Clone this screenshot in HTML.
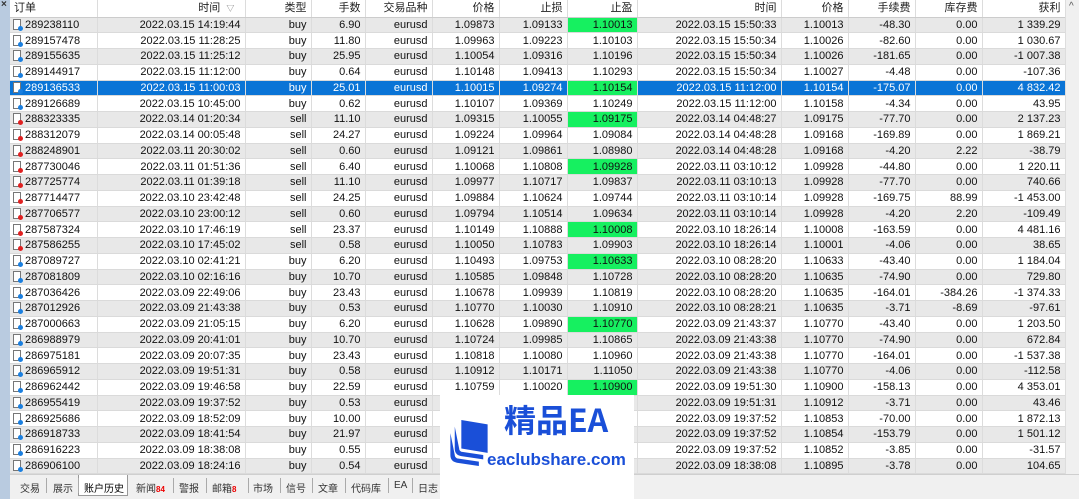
<!DOCTYPE html>
<html><head><meta charset="utf-8"><style>
*{margin:0;padding:0;box-sizing:border-box}
body{width:1079px;height:499px;overflow:hidden;background:#fff;font-family:"Liberation Sans","Noto Sans CJK SC",sans-serif;font-size:11px;color:#111;position:relative}
#strip{position:absolute;left:0;top:0;width:10px;height:499px;background:#b9cbe0}
#x{position:absolute;left:1px;top:-1px;font-size:10px;font-weight:bold;color:#333}
table{position:absolute;left:10px;top:0;border-collapse:collapse;table-layout:fixed;width:1055px}
td,th{height:15.75px;padding:0 4px 0 2px;text-align:right;white-space:nowrap;overflow:hidden;border-right:1px solid #dcdcdc;border-bottom:1px solid #dadada;line-height:14px;font-weight:normal}
th{height:17px;background:#fff;color:#222;border-bottom:1px solid #ccc}
th:first-child{text-align:left;padding-left:4px}
tr:nth-child(even) td{background:#e8e8e8}
tr.sel td{background:#0a74d6!important;color:#fff}
td.o{text-align:left;padding-left:3px}
td.g{background:#16f060!important;color:#111}
tr.sel td.g{background:#16f060!important;color:#111}
.ic{display:inline-block;width:8px;height:11px;border:1px solid #777;background:#fff;vertical-align:-2px;margin-right:4px;position:relative}
.ic:after{content:"";position:absolute;right:-3px;bottom:-2px;width:5px;height:5px;border-radius:50%;background:#1a7fe0}
.s .ic:after{background:#e02020}
#sb{position:absolute;left:1065px;top:0;width:14px;height:474px;background:#f0f0f0;border-left:1px solid #ddd}
#sb:before{content:"^";position:absolute;left:3px;top:1px;font-size:10px;color:#555}
#tabs{position:absolute;left:10px;top:474px;width:1069px;height:25px;background:#f0f0f0;border-top:1px solid #cfcfcf}
#tabs span{position:absolute;top:5px;font-size:10px;color:#333}
#tabs i{position:absolute;top:3px;width:1px;height:15px;background:#aaa}
#act{position:absolute;left:68px;top:0;width:50px;height:21px;background:#fff;border:1px solid #999;border-top:none}
#tabs b{color:#e00;font-size:8px;font-weight:bold}
#wm{position:absolute;left:440px;top:395px;width:194px;height:104px;background:#fff}
#wm .t1{position:absolute;left:64px;top:4px;font-size:32px;font-weight:bold;color:#1a4fd8;font-family:"Noto Sans CJK SC","Liberation Sans",sans-serif;line-height:40px}
#wm .t2{position:absolute;left:47px;top:55px;font-size:17px;font-weight:bold;color:#1a4fd8}
</style></head><body>
<div id="strip"><div id="x">×</div></div>
<table>
<colgroup><col style="width:87px"><col style="width:148px"><col style="width:66px"><col style="width:54px"><col style="width:67px"><col style="width:67px"><col style="width:68px"><col style="width:70px"><col style="width:144px"><col style="width:67px"><col style="width:67px"><col style="width:67px"><col style="width:83px"></colgroup>
<tr><th>订单</th><th>时间 &nbsp;<span style="font-size:8px;color:#777">▽</span>&nbsp;&nbsp;</th><th>类型</th><th>手数</th><th>交易品种</th><th>价格</th><th>止损</th><th>止盈</th><th>时间</th><th>价格</th><th>手续费</th><th>库存费</th><th>获利</th></tr>
<tr><td class="o"><span class="ic"></span>289238110</td><td>2022.03.15 14:19:44</td><td>buy</td><td>6.90</td><td>eurusd</td><td>1.09873</td><td>1.09133</td><td class="g">1.10013</td><td>2022.03.15 15:50:33</td><td>1.10013</td><td>-48.30</td><td>0.00</td><td>1 339.29</td></tr>
<tr><td class="o"><span class="ic"></span>289157478</td><td>2022.03.15 11:28:25</td><td>buy</td><td>11.80</td><td>eurusd</td><td>1.09963</td><td>1.09223</td><td>1.10103</td><td>2022.03.15 15:50:34</td><td>1.10026</td><td>-82.60</td><td>0.00</td><td>1 030.67</td></tr>
<tr><td class="o"><span class="ic"></span>289155635</td><td>2022.03.15 11:25:12</td><td>buy</td><td>25.95</td><td>eurusd</td><td>1.10054</td><td>1.09316</td><td>1.10196</td><td>2022.03.15 15:50:34</td><td>1.10026</td><td>-181.65</td><td>0.00</td><td>-1 007.38</td></tr>
<tr><td class="o"><span class="ic"></span>289144917</td><td>2022.03.15 11:12:00</td><td>buy</td><td>0.64</td><td>eurusd</td><td>1.10148</td><td>1.09413</td><td>1.10293</td><td>2022.03.15 15:50:34</td><td>1.10027</td><td>-4.48</td><td>0.00</td><td>-107.36</td></tr>
<tr class="sel"><td class="o"><span class="ic"></span>289136533</td><td>2022.03.15 11:00:03</td><td>buy</td><td>25.01</td><td>eurusd</td><td>1.10015</td><td>1.09274</td><td class="g">1.10154</td><td>2022.03.15 11:12:00</td><td>1.10154</td><td>-175.07</td><td>0.00</td><td>4 832.42</td></tr>
<tr><td class="o"><span class="ic"></span>289126689</td><td>2022.03.15 10:45:00</td><td>buy</td><td>0.62</td><td>eurusd</td><td>1.10107</td><td>1.09369</td><td>1.10249</td><td>2022.03.15 11:12:00</td><td>1.10158</td><td>-4.34</td><td>0.00</td><td>43.95</td></tr>
<tr class="s"><td class="o"><span class="ic"></span>288323335</td><td>2022.03.14 01:20:34</td><td>sell</td><td>11.10</td><td>eurusd</td><td>1.09315</td><td>1.10055</td><td class="g">1.09175</td><td>2022.03.14 04:48:27</td><td>1.09175</td><td>-77.70</td><td>0.00</td><td>2 137.23</td></tr>
<tr class="s"><td class="o"><span class="ic"></span>288312079</td><td>2022.03.14 00:05:48</td><td>sell</td><td>24.27</td><td>eurusd</td><td>1.09224</td><td>1.09964</td><td>1.09084</td><td>2022.03.14 04:48:28</td><td>1.09168</td><td>-169.89</td><td>0.00</td><td>1 869.21</td></tr>
<tr class="s"><td class="o"><span class="ic"></span>288248901</td><td>2022.03.11 20:30:02</td><td>sell</td><td>0.60</td><td>eurusd</td><td>1.09121</td><td>1.09861</td><td>1.08980</td><td>2022.03.14 04:48:28</td><td>1.09168</td><td>-4.20</td><td>2.22</td><td>-38.79</td></tr>
<tr class="s"><td class="o"><span class="ic"></span>287730046</td><td>2022.03.11 01:51:36</td><td>sell</td><td>6.40</td><td>eurusd</td><td>1.10068</td><td>1.10808</td><td class="g">1.09928</td><td>2022.03.11 03:10:12</td><td>1.09928</td><td>-44.80</td><td>0.00</td><td>1 220.11</td></tr>
<tr class="s"><td class="o"><span class="ic"></span>287725774</td><td>2022.03.11 01:39:18</td><td>sell</td><td>11.10</td><td>eurusd</td><td>1.09977</td><td>1.10717</td><td>1.09837</td><td>2022.03.11 03:10:13</td><td>1.09928</td><td>-77.70</td><td>0.00</td><td>740.66</td></tr>
<tr class="s"><td class="o"><span class="ic"></span>287714477</td><td>2022.03.10 23:42:48</td><td>sell</td><td>24.25</td><td>eurusd</td><td>1.09884</td><td>1.10624</td><td>1.09744</td><td>2022.03.11 03:10:14</td><td>1.09928</td><td>-169.75</td><td>88.99</td><td>-1 453.00</td></tr>
<tr class="s"><td class="o"><span class="ic"></span>287706577</td><td>2022.03.10 23:00:12</td><td>sell</td><td>0.60</td><td>eurusd</td><td>1.09794</td><td>1.10514</td><td>1.09634</td><td>2022.03.11 03:10:14</td><td>1.09928</td><td>-4.20</td><td>2.20</td><td>-109.49</td></tr>
<tr class="s"><td class="o"><span class="ic"></span>287587324</td><td>2022.03.10 17:46:19</td><td>sell</td><td>23.37</td><td>eurusd</td><td>1.10149</td><td>1.10888</td><td class="g">1.10008</td><td>2022.03.10 18:26:14</td><td>1.10008</td><td>-163.59</td><td>0.00</td><td>4 481.16</td></tr>
<tr class="s"><td class="o"><span class="ic"></span>287586255</td><td>2022.03.10 17:45:02</td><td>sell</td><td>0.58</td><td>eurusd</td><td>1.10050</td><td>1.10783</td><td>1.09903</td><td>2022.03.10 18:26:14</td><td>1.10001</td><td>-4.06</td><td>0.00</td><td>38.65</td></tr>
<tr><td class="o"><span class="ic"></span>287089727</td><td>2022.03.10 02:41:21</td><td>buy</td><td>6.20</td><td>eurusd</td><td>1.10493</td><td>1.09753</td><td class="g">1.10633</td><td>2022.03.10 08:28:20</td><td>1.10633</td><td>-43.40</td><td>0.00</td><td>1 184.04</td></tr>
<tr><td class="o"><span class="ic"></span>287081809</td><td>2022.03.10 02:16:16</td><td>buy</td><td>10.70</td><td>eurusd</td><td>1.10585</td><td>1.09848</td><td>1.10728</td><td>2022.03.10 08:28:20</td><td>1.10635</td><td>-74.90</td><td>0.00</td><td>729.80</td></tr>
<tr><td class="o"><span class="ic"></span>287036426</td><td>2022.03.09 22:49:06</td><td>buy</td><td>23.43</td><td>eurusd</td><td>1.10678</td><td>1.09939</td><td>1.10819</td><td>2022.03.10 08:28:20</td><td>1.10635</td><td>-164.01</td><td>-384.26</td><td>-1 374.33</td></tr>
<tr><td class="o"><span class="ic"></span>287012926</td><td>2022.03.09 21:43:38</td><td>buy</td><td>0.53</td><td>eurusd</td><td>1.10770</td><td>1.10030</td><td>1.10910</td><td>2022.03.10 08:28:21</td><td>1.10635</td><td>-3.71</td><td>-8.69</td><td>-97.61</td></tr>
<tr><td class="o"><span class="ic"></span>287000663</td><td>2022.03.09 21:05:15</td><td>buy</td><td>6.20</td><td>eurusd</td><td>1.10628</td><td>1.09890</td><td class="g">1.10770</td><td>2022.03.09 21:43:37</td><td>1.10770</td><td>-43.40</td><td>0.00</td><td>1 203.50</td></tr>
<tr><td class="o"><span class="ic"></span>286988979</td><td>2022.03.09 20:41:01</td><td>buy</td><td>10.70</td><td>eurusd</td><td>1.10724</td><td>1.09985</td><td>1.10865</td><td>2022.03.09 21:43:38</td><td>1.10770</td><td>-74.90</td><td>0.00</td><td>672.84</td></tr>
<tr><td class="o"><span class="ic"></span>286975181</td><td>2022.03.09 20:07:35</td><td>buy</td><td>23.43</td><td>eurusd</td><td>1.10818</td><td>1.10080</td><td>1.10960</td><td>2022.03.09 21:43:38</td><td>1.10770</td><td>-164.01</td><td>0.00</td><td>-1 537.38</td></tr>
<tr><td class="o"><span class="ic"></span>286965912</td><td>2022.03.09 19:51:31</td><td>buy</td><td>0.58</td><td>eurusd</td><td>1.10912</td><td>1.10171</td><td>1.11050</td><td>2022.03.09 21:43:38</td><td>1.10770</td><td>-4.06</td><td>0.00</td><td>-112.58</td></tr>
<tr><td class="o"><span class="ic"></span>286962442</td><td>2022.03.09 19:46:58</td><td>buy</td><td>22.59</td><td>eurusd</td><td>1.10759</td><td>1.10020</td><td class="g">1.10900</td><td>2022.03.09 19:51:30</td><td>1.10900</td><td>-158.13</td><td>0.00</td><td>4 353.01</td></tr>
<tr><td class="o"><span class="ic"></span>286955419</td><td>2022.03.09 19:37:52</td><td>buy</td><td>0.53</td><td>eurusd</td><td>1.10772</td><td>1.10032</td><td>1.10912</td><td>2022.03.09 19:51:31</td><td>1.10912</td><td>-3.71</td><td>0.00</td><td>43.46</td></tr>
<tr><td class="o"><span class="ic"></span>286925686</td><td>2022.03.09 18:52:09</td><td>buy</td><td>10.00</td><td>eurusd</td><td>1.10666</td><td>1.09930</td><td>1.10806</td><td>2022.03.09 19:37:52</td><td>1.10853</td><td>-70.00</td><td>0.00</td><td>1 872.13</td></tr>
<tr><td class="o"><span class="ic"></span>286918733</td><td>2022.03.09 18:41:54</td><td>buy</td><td>21.97</td><td>eurusd</td><td>1.10785</td><td>1.10044</td><td>1.10925</td><td>2022.03.09 19:37:52</td><td>1.10854</td><td>-153.79</td><td>0.00</td><td>1 501.12</td></tr>
<tr><td class="o"><span class="ic"></span>286916223</td><td>2022.03.09 18:38:08</td><td>buy</td><td>0.55</td><td>eurusd</td><td>1.10909</td><td>1.10170</td><td>1.11050</td><td>2022.03.09 19:37:52</td><td>1.10852</td><td>-3.85</td><td>0.00</td><td>-31.57</td></tr>
<tr><td class="o"><span class="ic"></span>286906100</td><td>2022.03.09 18:24:16</td><td>buy</td><td>0.54</td><td>eurusd</td><td>1.10701</td><td>1.09960</td><td>1.10840</td><td>2022.03.09 18:38:08</td><td>1.10895</td><td>-3.78</td><td>0.00</td><td>104.65</td></tr>
</table>
<div id="sb"></div>
<div id="tabs">
<div id="act"></div>
<span style="left:10px">交易</span><i style="left:36px"></i>
<span style="left:43px">展示</span><i style="left:68px"></i>
<span style="left:74px;color:#000">账户历史</span>
<span style="left:126px">新闻<b>84</b></span><i style="left:163px"></i>
<span style="left:169px">警报</span><i style="left:196px"></i>
<span style="left:202px">邮箱<b>8</b></span><i style="left:238px"></i>
<span style="left:243px">市场</span><i style="left:270px"></i>
<span style="left:276px">信号</span><i style="left:302px"></i>
<span style="left:308px">文章</span><i style="left:335px"></i>
<span style="left:341px">代码库</span><i style="left:378px"></i>
<span style="left:384px">EA</span><i style="left:402px"></i>
<span style="left:408px">日志</span>
</div>
<div id="wm">
<svg style="position:absolute;left:6px;top:22px" width="46" height="52" viewBox="0 0 42 46">
<path d="M4 14 L4 34 Q4 40 10 41 L30 44 L30 40 L10 37 Q8 36 8 34 Z" fill="#1a4fd8"/>
<path d="M8 8 L8 28 Q8 34 14 35 L34 38 L34 34 L14 31 Q12 30 12 28 Z" fill="#1a4fd8"/>
<path d="M14 2 L38 6 L38 32 L14 28 Z" fill="#1a4fd8"/>
</svg>
<div class="t1">精品EA</div>
<div class="t2">eaclubshare.com</div>
</div>
</body></html>
